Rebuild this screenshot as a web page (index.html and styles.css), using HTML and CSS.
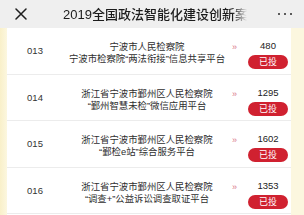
FILE: index.html
```html
<!DOCTYPE html>
<html lang="zh">
<head>
<meta charset="utf-8">
<link rel="stylesheet" href="styles.css">
</head>
<body>
<header class="bar">
  <svg class="close" width="12" height="12" viewBox="0 0 12 12"><path d="M1 1 L11 11 M11 1 L1 11" stroke="#1e1e1e" stroke-width="1.5" stroke-linecap="round"/></svg>
  <div class="title">2019全国政法智能化建设创新案例</div>
  <div class="more"><i></i><i></i><i></i></div>
</header>
<main class="page">
  <div class="card">
    <div class="row">
      <div class="num">013</div>
      <div class="name"><div>宁波市人民检察院</div><div>宁波市检察院“两法衔接”信息共享平台</div></div>
      <div class="arrow">»</div>
      <div class="vote"><div class="count">480</div><div class="badge">已投</div></div>
    </div>
    <div class="row">
      <div class="num">014</div>
      <div class="name"><div>浙江省宁波市鄞州区人民检察院</div><div>“鄞州智慧未检”微信应用平台</div></div>
      <div class="arrow">»</div>
      <div class="vote"><div class="count">1295</div><div class="badge">已投</div></div>
    </div>
    <div class="row">
      <div class="num">015</div>
      <div class="name"><div>浙江省宁波市鄞州区人民检察院</div><div>“鄞检e站”综合服务平台</div></div>
      <div class="arrow">»</div>
      <div class="vote"><div class="count">1602</div><div class="badge">已投</div></div>
    </div>
    <div class="row">
      <div class="num">016</div>
      <div class="name"><div>浙江省宁波市鄞州区人民检察院</div><div>“调查+”公益诉讼调查取证平台</div></div>
      <div class="arrow">»</div>
      <div class="vote"><div class="count">1353</div><div class="badge">已投</div></div>
    </div>
  </div>
</main>
</body>
</html>
```

FILE: styles.css
```css
* { box-sizing: border-box; margin: 0; padding: 0; }
html, body { width: 304px; height: 215px; overflow: hidden; }
body {
  font-family: "Liberation Sans", "Noto Sans CJK SC", sans-serif;
  color: #333;
  background: #fcf7df;
}
.bar {
  height: 28px;
  background: #efefef;
  display: flex;
  align-items: center;
  padding-left: 15px;
  padding-right: 12px;
}
.close { flex: none; margin-top: -1px; }
.title {
  margin-left: 36px;
  width: 184px;
  white-space: nowrap;
  overflow: hidden;
  font-size: 13px;
  font-weight: 500;
  color: #1c1c1c;
  line-height: 15px;
  -webkit-mask-image: linear-gradient(to right, #000 92%, transparent 100%);
  mask-image: linear-gradient(to right, #000 92%, transparent 100%);
}
.more { margin-left: auto; display: flex; gap: 3.5px; }
.more i { display: block; width: 2.5px; height: 2.5px; border-radius: 50%; background: #2a2a2a; }
.page {
  height: 187px;
  padding-left: 7px;
  padding-right: 13px;
  background: linear-gradient(to right, #f9f0c9 0, #fcf7df 7px, #fcf7df 100%);
}
.card { background: #fff; height: 100%; }
.row {
  height: 46.5px;
  display: grid;
  grid-template-columns: 56px 168px 14px 46px;
  align-items: center;
  border-bottom: 1px solid #ececec;
}
.num { text-align: center; font-size: 9.5px; color: #333; }
.name {
  text-align: center;
  font-size: 9.4px;
  line-height: 12px;
  color: #2e2e2e;
  margin-top: 5px;
  white-space: nowrap;
}
.arrow {
  align-self: start;
  margin-top: 13px;
  font-size: 9px;
  line-height: 12px;
  color: #d9778a;
  padding-left: 1px;
}
.vote {
  display: flex;
  flex-direction: column;
  align-items: center;
  margin-top: 8px;
}
.count { font-size: 9.5px; line-height: 12px; color: #222; }
.badge {
  margin-top: 3px;
  width: 40px;
  height: 14px;
  border-radius: 7px;
  background: #d02130;
  color: #fff;
  font-size: 9px;
  line-height: 14px;
  text-align: center;
}
```
